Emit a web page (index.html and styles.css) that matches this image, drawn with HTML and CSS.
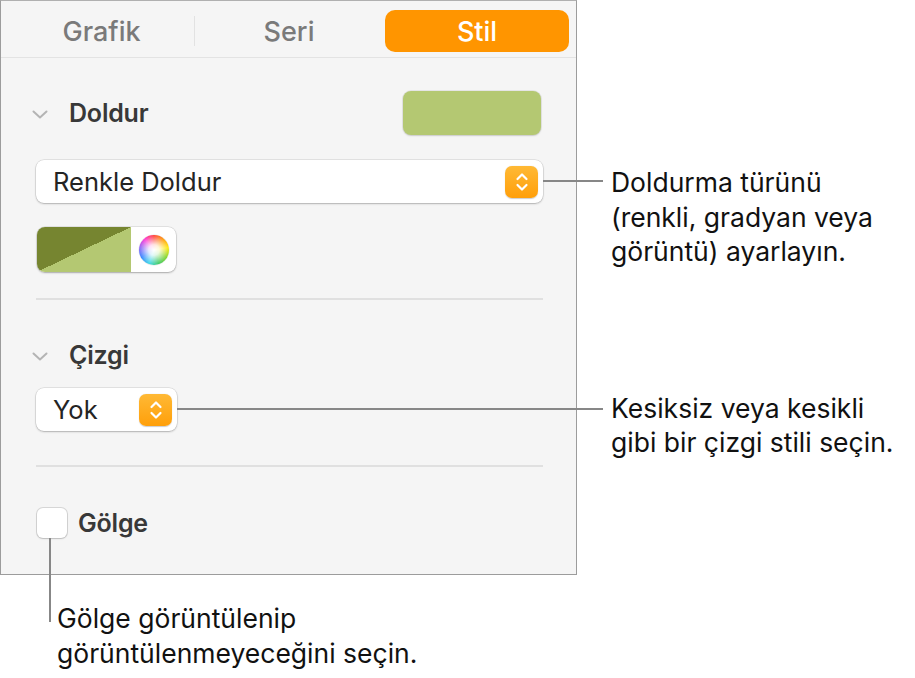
FILE: index.html
```html
<!DOCTYPE html>
<html lang="tr">
<head>
<meta charset="utf-8">
<title>Stil</title>
<link rel="stylesheet" href="styles.css">
</head>
<body>
<div class="page">
  <div class="row">
    <section class="panel">
      <div class="tabs">
        <div class="tab tab-first">Grafik</div>
        <div class="tab">Seri</div>
        <div class="tab tab-active">Stil</div>
      </div>
      <div class="body">
        <div class="head head-fill">
          <svg class="chev" width="16" height="9" viewBox="0 0 16 9"><path d="M1.5 1.5 L8 7.5 L14.5 1.5" fill="none" stroke="#b4b4b4" stroke-width="2" stroke-linecap="round" stroke-linejoin="round"/></svg>
          <span class="head-title">Doldur</span>
          <div class="swatch"></div>
        </div>
        <div class="popup popup-wide">
          <span class="popup-label">Renkle Doldur</span>
          <span class="stepper">
            <svg width="14" height="22" viewBox="0 0 14 22"><path d="M2.5 8 L7 3.5 L11.5 8 M2.5 14 L7 18.5 L11.5 14" fill="none" stroke="#fff" stroke-width="2.2" stroke-linecap="round" stroke-linejoin="round"/></svg>
          </span>
          <span class="leader leader-fill"></span>
        </div>
        <div class="well">
          <div class="well-color"></div>
          <div class="well-wheel"><div class="wheel"></div></div>
        </div>
        <div class="divider"></div>
        <div class="head head-line">
          <svg class="chev" width="16" height="9" viewBox="0 0 16 9"><path d="M1.5 1.5 L8 7.5 L14.5 1.5" fill="none" stroke="#b4b4b4" stroke-width="2" stroke-linecap="round" stroke-linejoin="round"/></svg>
          <span class="head-title">Çizgi</span>
        </div>
        <div class="popup popup-small">
          <span class="popup-label">Yok</span>
          <span class="stepper">
            <svg width="14" height="22" viewBox="0 0 14 22"><path d="M2.5 8 L7 3.5 L11.5 8 M2.5 14 L7 18.5 L11.5 14" fill="none" stroke="#fff" stroke-width="2.2" stroke-linecap="round" stroke-linejoin="round"/></svg>
          </span>
          <span class="leader leader-line"></span>
        </div>
        <div class="divider divider-2"></div>
        <div class="check-row">
          <span class="checkbox"><span class="leader leader-shadow"></span></span>
          <span class="head-title">Gölge</span>
        </div>
      </div>
    </section>
    <div class="notes">
      <p class="note note-fill">Doldurma türünü<br>(renkli, gradyan veya<br>görüntü) ayarlayın.</p>
      <p class="note note-line">Kesiksiz veya kesikli<br>gibi bir çizgi stili seçin.</p>
    </div>
  </div>
  <p class="note note-shadow">Gölge görüntülenip<br>görüntülenmeyeceğini seçin.</p>
</div>
</body>
</html>
```

FILE: styles.css
```css
* { box-sizing: border-box; }
html, body { margin: 0; padding: 0; background: #ffffff; }
body {
  font-family: Inter, "Noto Sans", "Liberation Sans", sans-serif;
  color: #1d1d1d;
  width: 915px;
  height: 678px;
  overflow: hidden;
}
.page { display: flex; flex-direction: column; }
.row { display: flex; align-items: flex-start; }

.panel {
  width: 577px;
  height: 575px;
  background: #f5f5f5;
  border: 1px solid #9c9c9c;
  border-top-color: #b0b0b0;
  display: flex;
  flex-direction: column;
}

.tabs {
  display: grid;
  grid-template-columns: 1fr 1fr 1fr;
  column-gap: 4px;
  padding: 9px 7px 5px 8px;
  border-bottom: 1px solid #e3e3e3;
  align-items: center;
}
.tab {
  height: 42px;
  display: flex;
  align-items: center;
  justify-content: center;
  font-size: 27px;
  font-weight: 500;
  color: #7a7a7a;
  letter-spacing: 0;
}
.tab-first {
  height: 30px;
  border-right: 1px solid #e2e2e2;
  margin-right: -2px;
}
.tab-active {
  background: #ff9500;
  color: #ffffff;
  border-radius: 10px;
  font-weight: 500;
}

.body {
  display: flex;
  flex-direction: column;
  padding: 33px 33px 0 35px;
}
.head {
  display: flex;
  align-items: center;
  height: 44px;
}
.chev { margin-left: -4px; margin-right: 21px; margin-top: 2px; }
.head-title {
  font-size: 25px;
  font-weight: 600;
  color: #383838;
  letter-spacing: -0.2px;
}
.swatch {
  margin-left: auto;
  width: 138px;
  height: 44px;
  border-radius: 8px;
  background: #b4c872;
  box-shadow: 0 0 0 1px rgba(0,0,0,0.06), 0 1px 2px rgba(0,0,0,0.12);
  margin-right: 2px;
}
.head-line { margin-top: 40px; height: 30px; }

.popup {
  position: relative;
  display: flex;
  align-items: center;
  height: 43px;
  background: #ffffff;
  border-radius: 8px;
  box-shadow: 0 0 0 0.5px rgba(0,0,0,0.14), 0 1px 2px rgba(0,0,0,0.22);
  padding: 0 5px 0 17px;
}
.popup-wide { margin-top: 25px; }
.popup-small { width: 141px; margin-top: 18px; }
.popup-label { font-size: 25.5px; color: #242424; flex: 1; letter-spacing: 0; }
.stepper {
  width: 33px;
  height: 32px;
  border-radius: 7px;
  background: linear-gradient(#ffb935, #ff9f0a);
  display: flex;
  align-items: center;
  justify-content: center;
  box-shadow: 0 0.5px 1px rgba(0,0,0,0.2);
}

.leader {
  position: absolute;
  background: #878787;
}
.leader-fill { left: 100%; top: 20px; width: 60px; height: 2px; }
.leader-line { left: 100%; top: 20px; width: 426px; height: 2px; }
.leader-shadow { left: 12px; top: 100%; width: 2px; height: 84px; }

.well {
  margin-top: 24px;
  margin-left: 1px;
  width: 139px;
  height: 45px;
  display: flex;
  border-radius: 8px;
  overflow: hidden;
  background: #fff;
  box-shadow: 0 0 0 0.5px rgba(0,0,0,0.14), 0 1px 2px rgba(0,0,0,0.25);
}
.well-color {
  width: 94px;
  background: linear-gradient(to top left, #b4c872 0, #b4c872 50%, #768530 50%, #768530 100%);
}
.well-wheel {
  flex: 1;
  display: flex;
  align-items: center;
  justify-content: center;
}
.wheel {
  width: 30px;
  height: 30px;
  border-radius: 50%;
  background:
    radial-gradient(circle, #ffffff 0, rgba(255,255,255,0.85) 25%, rgba(255,255,255,0) 72%),
    conic-gradient(from 0deg, #ff3b30, #ff9500, #ffe600, #7ed321, #34c759, #32d4e6, #2f80ff, #8a5cf6, #ff2dd2, #ff3b30);
  box-shadow: 0 0 0 0.5px rgba(0,0,0,0.1);
}

.divider {
  margin-top: 26px;
  height: 2px;
  background: #e0e0e0;
  margin-right: 0;
}
.divider-2 { margin-top: 34px; }

.check-row {
  display: flex;
  align-items: center;
  margin-top: 41px;
  gap: 11px;
}
.checkbox {
  position: relative;
  width: 30px;
  height: 30px;
  border-radius: 6px;
  background: #ffffff;
  box-shadow: 0 0 0 1px rgba(0,0,0,0.12), 0 1px 2px rgba(0,0,0,0.12);
  margin-left: 1px;
}

.notes {
  display: flex;
  flex-direction: column;
  padding-left: 34px;
}
.note {
  margin: 0;
  font-size: 26.5px;
  line-height: 34.5px;
  color: #111;
  letter-spacing: 0;
}
.note-fill { margin-top: 165px; }
.note-line { margin-top: 122px; }
.note-shadow { margin: 26px 0 0 57px; }
```
